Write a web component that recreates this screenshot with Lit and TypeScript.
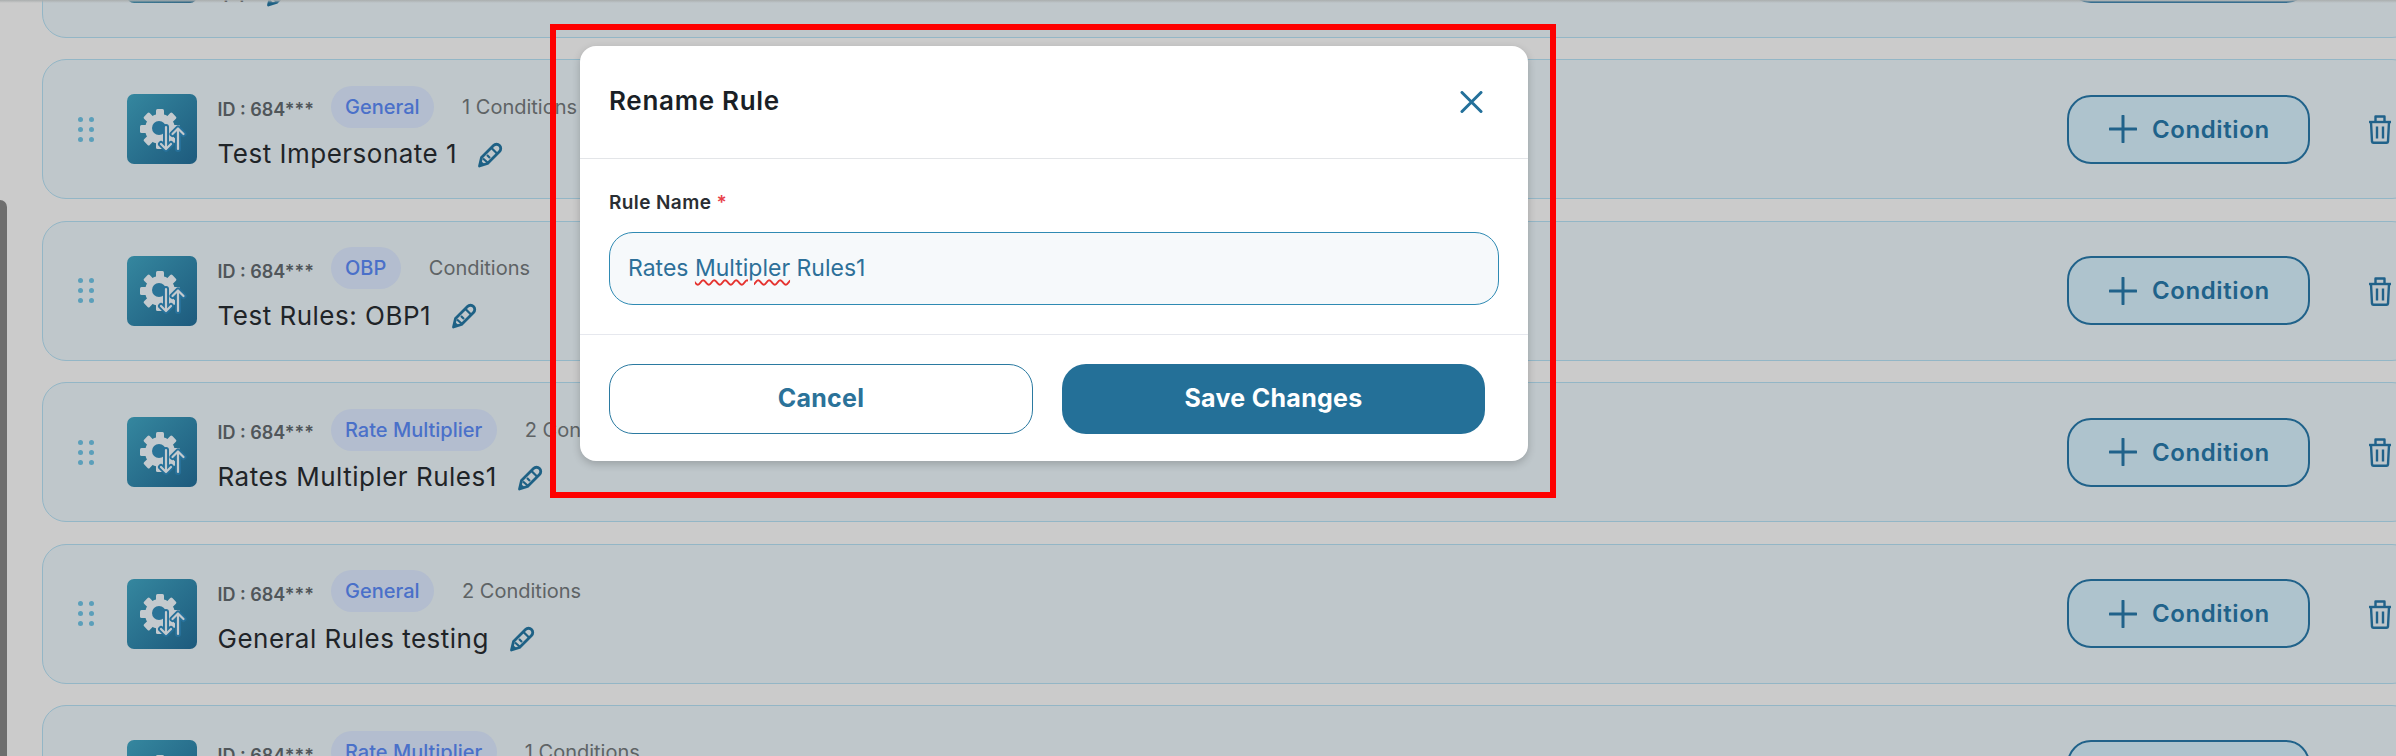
import { LitElement, html, css, svg } from 'lit'
import { customElement } from 'lit/decorators.js'

interface Rule {
  name: string
  type: string
  conditions: string
}

const RULES: Rule[] = [
  { name: 'T1', type: 'General', conditions: '1 Conditions' },
  { name: 'Test Impersonate 1', type: 'General', conditions: '1 Conditions' },
  { name: 'Test Rules: OBP1', type: 'OBP', conditions: 'Conditions' },
  { name: 'Rates Multipler Rules1', type: 'Rate Multiplier', conditions: '2 Conditions' },
  { name: 'General Rules testing', type: 'General', conditions: '2 Conditions' },
  { name: 'Rates Multipler Rules1', type: 'Rate Multiplier', conditions: '1 Conditions' },
]

const gearIcon = svg`
  <svg width="70" height="70" viewBox="0 0 70 70">
    <g fill="#c4cace">
      <circle cx="33" cy="35" r="15"></circle>
      ${[0, 45, 90, 135, 180, 225, 270, 315].map(
        (a) => svg`<rect x="29" y="15" width="8" height="8" rx="1.500" transform="rotate(${a} 33 35)"></rect>`
      )}
    </g>
    <circle cx="32" cy="34" r="7" fill="#2a7397"></circle>
    <g fill="none" stroke="#27719a" stroke-width="6" stroke-linecap="round" stroke-linejoin="round">
      <path d="M39 33v21"></path>
      <path d="M34 50l5 5 5-5"></path>
      <path d="M51 55V36"></path>
      <path d="M45.500 40l5.500-5.500 5.500 5.500"></path>
    </g>
    <g fill="none" stroke="#c4cace" stroke-width="2.200" stroke-linecap="round" stroke-linejoin="round">
      <path d="M39 33v21"></path>
      <path d="M34 50l5 5 5-5"></path>
      <path d="M51 55V36"></path>
      <path d="M45.500 40l5.500-5.500 5.500 5.500"></path>
    </g>
  </svg>
`

const pencilIcon = svg`
  <svg class="pencil" width="26" height="26" viewBox="0 0 26 26" fill="none" stroke="#1e6185">
    <path d="M2.500 24l2-8.500L16.500 3.500a4 4 0 0 1 6 6L10.500 21.500z" stroke-width="2.800" stroke-linejoin="round"></path>
    <path d="M6 16.500l4.500 4M10 13l3 3M14.500 6l5.500 5.500" stroke-width="2.200"></path>
    <path d="M2 24.500l1.500-6 4.500 4z" fill="#1e6185" stroke="none"></path>
  </svg>
`

const trashIcon = svg`
  <svg width="24" height="30" viewBox="0 0 24 30" fill="none" stroke="#20628a" stroke-width="2.400" stroke-linejoin="round">
    <path d="M1 8h22"></path>
    <path d="M7.500 7.500V2.500h9v5"></path>
    <path d="M3 8l1 19.500a1.500 1.500 0 0 0 1.500 1.300h13a1.500 1.500 0 0 0 1.500-1.300L21 8"></path>
    <path d="M9 12.500v12M15 12.500v12"></path>
  </svg>
`

@customElement('app-root')
export class AppRoot extends LitElement {
  static styles = css`
    :host {
      display: block;
      position: relative;
      width: 2396px;
      height: 756px;
      overflow: hidden;
      background: #cbcbcb;
      font-family: Inter, 'Liberation Sans', sans-serif;
    }

    .top-shade {
      position: absolute;
      top: 0;
      left: 0;
      right: 0;
      height: 3px;
      background: linear-gradient(#aaaeae, rgba(170, 174, 174, 0));
    }

    .scrollbar {
      position: absolute;
      left: 0;
      top: 200px;
      bottom: 0;
      width: 7px;
      background: #6e6e6e;
      border-top-right-radius: 7px;
    }

    .list {
      display: flex;
      flex-direction: column;
      gap: 21.400px;
      width: 2374px;
      margin: -102px 0 0 42px;
    }

    .card {
      box-sizing: border-box;
      flex: none;
      height: 140px;
      display: flex;
      align-items: center;
      padding: 0 23px 0 34.500px;
      background: #bfc7cb;
      border: 1.500px solid #93b6c6;
      border-radius: 24px;
    }

    .grip {
      display: grid;
      grid-template-columns: repeat(2, 5px);
      gap: 5px 6px;
      width: 16px;
      margin-right: 33px;
    }

    .grip i {
      width: 5px;
      height: 5px;
      border-radius: 50%;
      background: #5b9fba;
    }

    .logo {
      flex: none;
      width: 70px;
      height: 70px;
      margin-right: 21px;
      border-radius: 7px;
      background: linear-gradient(135deg, #35879f, #1d5a7d);
    }

    .logo svg {
      display: block;
    }

    .info {
      flex: 1;
      display: flex;
      flex-direction: column;
      gap: 8px;
      margin-top: -1px;
    }

    .meta {
      display: flex;
      align-items: center;
    }

    .id {
      width: 113px;
      padding-top: 6px;
      font-size: 18px;
      font-weight: 600;
      color: #50565a;
      white-space: nowrap;
    }

    .pill {
      height: 42px;
      padding: 0 14.500px;
      display: flex;
      align-items: center;
      margin-right: 28px;
      border-radius: 21px;
      background: #b3bdcf;
      color: #4a70c9;
      font-size: 20px;
      font-weight: 500;
    }

    .count {
      font-size: 20px;
      color: #5e6365;
    }

    .title-row {
      display: flex;
      align-items: center;
      gap: 20px;
      height: 36px;
    }

    .title {
      font-size: 26px;
      letter-spacing: 0.500px;
      color: #1f2428;
    }

    .pencil {
      margin-top: 2px;
    }

    .add {
      box-sizing: border-box;
      flex: none;
      width: 243px;
      height: 69px;
      display: flex;
      align-items: center;
      gap: 15px;
      padding-left: 40px;
      margin-right: 58px;
      background: #aec3cd;
      border: 2px solid #20628a;
      border-radius: 24px;
      color: #20628a;
      font-size: 24px;
      font-weight: 600;
      letter-spacing: 0.600px;
    }

    .modal {
      position: absolute;
      left: 580px;
      top: 46px;
      width: 948px;
      height: 415px;
      display: flex;
      flex-direction: column;
      background: #fff;
      border-radius: 16px;
      box-shadow: 0 3px 8px rgba(0, 0, 0, 0.2);
    }

    .modal-head {
      flex: none;
      height: 112.500px;
      display: flex;
      align-items: center;
      justify-content: space-between;
      padding: 0 45px 0 29px;
      border-bottom: 1.500px solid #e3e5e8;
      box-sizing: border-box;
    }

    .modal-head h2 {
      margin: 0 0 2px;
      font-size: 26px;
      font-weight: 600;
      letter-spacing: 0.700px;
      color: #1a1f26;
    }

    .close {
      display: block;
    }

    .modal-body {
      flex: none;
      height: 176px;
      box-sizing: border-box;
      padding: 32px 29px 0;
      border-bottom: 1.500px solid #e6e8ee;
    }

    .label {
      height: 24px;
      line-height: 24px;
      font-size: 19px;
      font-weight: 600;
      letter-spacing: 0.400px;
      color: #2a2e33;
    }

    .label span {
      color: #e8414a;
    }

    .input {
      box-sizing: border-box;
      height: 73px;
      margin-top: 17px;
      width: 890px;
      display: flex;
      align-items: center;
      padding-left: 18px;
      background: #f6f9fb;
      border: 1.500px solid #2f8ab3;
      border-radius: 24px;
      color: #2d7099;
      font-size: 23px;
    }

    .typo {
      text-decoration: underline wavy #e5332f 1.500px;
      text-underline-offset: 3px;
    }

    .modal-foot {
      display: flex;
      gap: 29px;
      padding: 29px 29px 0;
    }

    .btn {
      box-sizing: border-box;
      flex: none;
      height: 70px;
      padding-bottom: 2px;
      display: flex;
      align-items: center;
      justify-content: center;
      border-radius: 24px;
      font-size: 25px;
      font-weight: 700;
      letter-spacing: 0.300px;
    }

    .cancel {
      width: 424px;
      background: #fff;
      border: 1.500px solid #2b7aa1;
      color: #2b7299;
    }

    .save {
      width: 423px;
      background: #247098;
      color: #fff;
    }

    .frame {
      position: absolute;
      left: 550px;
      top: 24px;
      width: 1006px;
      height: 474px;
      box-sizing: border-box;
      border: 6px solid #fe0000;
      pointer-events: none;
    }
  `

  private renderCard(rule: Rule) {
    return html`
      <div class="card">
        <div class="grip">${[0, 1, 2, 3, 4, 5].map(() => html`<i></i>`)}</div>
        <div class="logo">${gearIcon}</div>
        <div class="info">
          <div class="meta">
            <span class="id">ID : 684***</span>
            <span class="pill">${rule.type}</span>
            <span class="count">${rule.conditions}</span>
          </div>
          <div class="title-row">
            <span class="title">${rule.name}</span>
            ${pencilIcon}
          </div>
        </div>
        <div class="add">
          <svg width="28" height="28" viewBox="0 0 28 28" stroke="#20628a" stroke-width="3" stroke-linecap="round">
            <path d="M14 1v26M1 14h26"></path>
          </svg>
          Condition
        </div>
        ${trashIcon}
      </div>
    `
  }

  render() {
    return html`
      <div class="list">${RULES.map((r) => this.renderCard(r))}</div>
      <div class="top-shade"></div>
      <div class="scrollbar"></div>
      <div class="modal">
        <div class="modal-head">
          <h2>Rename Rule</h2>
          <svg class="close" width="23" height="22" viewBox="0 0 23 22" stroke="#23709a" stroke-width="3" stroke-linecap="round">
            <path d="M2 1.500l19 19M21 1.500l-19 19"></path>
          </svg>
        </div>
        <div class="modal-body">
          <div class="label">Rule Name <span>*</span></div>
          <div class="input"><span>Rates <span class="typo">Multipler</span> Rules1</span></div>
        </div>
        <div class="modal-foot">
          <div class="btn cancel">Cancel</div>
          <div class="btn save">Save Changes</div>
        </div>
      </div>
      <div class="frame"></div>
    `
  }
}
